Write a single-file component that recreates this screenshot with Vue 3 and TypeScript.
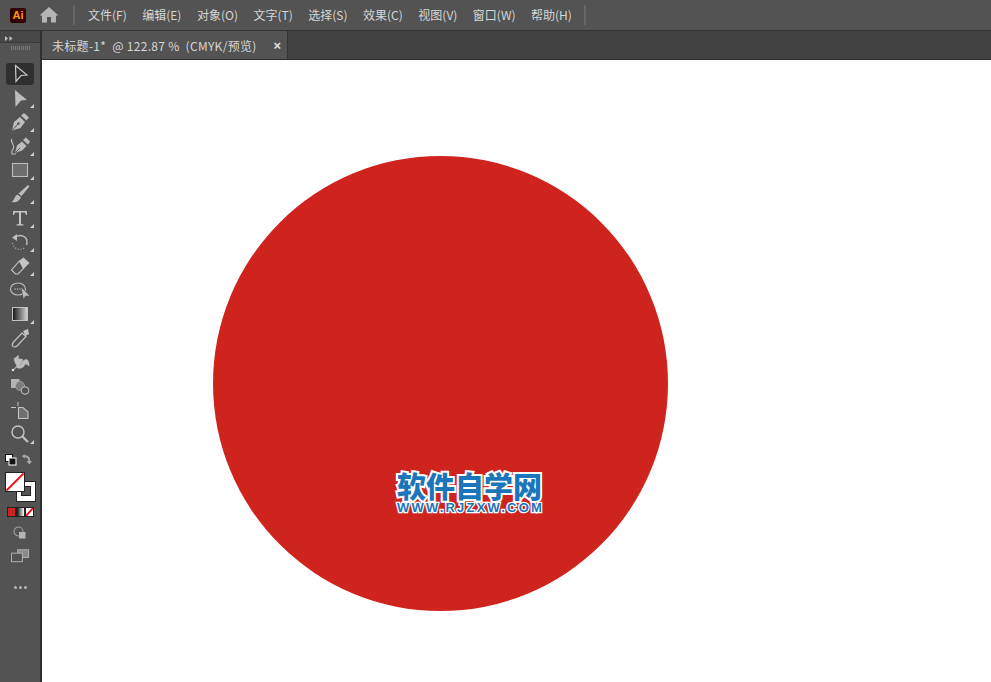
<script setup lang="ts">
const menus = ['文件(F)', '编辑(E)', '对象(O)', '文字(T)', '选择(S)', '效果(C)', '视图(V)', '窗口(W)', '帮助(H)']
const docTitle = '未标题-1*  @ 122.87 %  (CMYK/预览)'
</script>

<template>
  <div class="app">
    <header class="menubar">
      <div class="ai-logo">Ai</div>
      <svg class="home" width="20" height="18" viewBox="0 0 20 18">
        <path d="M10 1 L0.5 9.5 L3 9.5 L3 16.5 L8 16.5 L8 11 L12 11 L12 16.5 L17 16.5 L17 9.5 L19.5 9.5 Z" fill="#b4b4b4" />
      </svg>
      <span class="sep first"></span>
      <nav class="menus">
        <span v-for="m in menus" :key="m" class="menu">{{ m }}</span>
      </nav>
      <span class="sep"></span>
    </header>

    <div class="body">
      <aside class="toolbar">
        <div class="collapse">
          <svg width="8" height="5" viewBox="0 0 8 5"><path d="M0 0 L3 2.5 L0 5 Z M4.5 0 L7.5 2.5 L4.5 5 Z" fill="#c4c4c4" /></svg>
        </div>
        <div class="grip"></div>

        <div class="tool active">
          <svg width="24" height="24" viewBox="0 0 24 24"><path d="M7.5 3.5 L19 13 L13 13.5 L8 19.5 Z" fill="none" stroke="#c8c8c8" stroke-width="1.2" /></svg>
        </div>
        <div class="tool more">
          <svg width="24" height="24" viewBox="0 0 24 24"><path d="M7 4 L19 14 L13 14.5 L7.5 21 Z" fill="#bdbdbd" /></svg>
        </div>
        <div class="tool more">
          <svg width="24" height="24" viewBox="0 0 24 24">
            <path d="M12 7 L17 12 L12.5 18 L4 20.5 L6 12 Z" fill="#bdbdbd" />
            <path d="M13 5.5 L16 3 L21 7.5 L18.5 10.5 Z" fill="#bdbdbd" />
            <path d="M4.5 20 L10 14" stroke="#535353" stroke-width="1" />
            <circle cx="10.5" cy="13.5" r="1.2" fill="#535353" />
          </svg>
        </div>
        <div class="tool more">
          <svg width="24" height="24" viewBox="0 0 24 24">
            <path d="M14 7.5 L18.5 12 L14 16.5 L7 19 L9 11.5 Z" fill="#bdbdbd" />
            <path d="M15 6 L18 3.5 L22 7.5 L20 10.5 Z" fill="#bdbdbd" />
            <path d="M7.5 18.5 L12 14" stroke="#535353" stroke-width="1" />
            <path d="M4 5 C1.5 8 7 10 5.5 14 C4.5 16 3 18 4 20 L8 20" fill="none" stroke="#bdbdbd" stroke-width="1.1" />
          </svg>
        </div>
        <div class="tool more">
          <svg width="24" height="24" viewBox="0 0 24 24"><rect x="4.5" y="5.5" width="15" height="13" fill="#6e6e6e" stroke="#bdbdbd" stroke-width="1.1" /></svg>
        </div>
        <div class="tool more">
          <svg width="24" height="24" viewBox="0 0 24 24">
            <path d="M20 3 L21.5 4.5 L13.5 14 L10.5 11.5 Z" fill="#bdbdbd" />
            <path d="M9.5 12.5 L12.8 15 C12 19 8 21 3.5 20 C6.5 18.5 6 14.5 9.5 12.5 Z" fill="#bdbdbd" />
          </svg>
        </div>
        <div class="tool more">
          <svg width="24" height="24" viewBox="0 0 24 24"><path d="M5 5 L19 5 L19 9 L18 9 L17 6.5 L13 6.5 L13 18 L15.5 18.5 L15.5 19.5 L8.5 19.5 L8.5 18.5 L11 18 L11 6.5 L7 6.5 L6 9 L5 9 Z" fill="#c4c4c4" /></svg>
        </div>
        <div class="tool more">
          <svg width="24" height="24" viewBox="0 0 24 24">
            <path d="M8 7 C12 4 19 6 19 12 C19 13 18.8 14 18.5 15" fill="none" stroke="#bdbdbd" stroke-width="1.4" />
            <path d="M4 7.5 L9 4 L9 11 Z" fill="#bdbdbd" />
            <path d="M4.5 13 C5 18 11 21.5 16.5 18" fill="none" stroke="#a0a0a0" stroke-width="1.2" stroke-dasharray="1.2 1.6" />
          </svg>
        </div>
        <div class="tool more">
          <svg width="24" height="24" viewBox="0 0 24 24">
            <path d="M11.5 7 L15.5 14.5 L10 20 L7.5 20 L3.5 16 Z" fill="#535353" stroke="#c4c4c4" stroke-width="1.1" />
            <path d="M11.5 6.5 L15.5 3.5 L21.5 9 L15.5 15 Z" fill="#c4c4c4" />
          </svg>
        </div>
        <div class="tool">
          <svg width="24" height="24" viewBox="0 0 24 24">
            <ellipse cx="10" cy="11" rx="7.5" ry="6" fill="none" stroke="#bdbdbd" stroke-width="1.1" />
            <path d="M6.5 11 H13" stroke="#e0e0e0" stroke-width="1.1" stroke-dasharray="1.2 1.2" />
            <path d="M13 9 L22 18 L17.5 18 L15.5 21.5 Z" fill="#bdbdbd" stroke="#535353" stroke-width="0.6" />
          </svg>
        </div>
        <div class="tool more">
          <svg width="24" height="24" viewBox="0 0 24 24">
            <defs>
              <linearGradient id="grad-tool" x1="0" y1="0" x2="1" y2="0">
                <stop offset="0" stop-color="#151515" />
                <stop offset="1" stop-color="#d8d8d8" />
              </linearGradient>
            </defs>
            <rect x="4.5" y="5.5" width="15" height="13" fill="url(#grad-tool)" stroke="#c4c4c4" stroke-width="1" />
          </svg>
        </div>
        <div class="tool">
          <svg width="24" height="24" viewBox="0 0 24 24">
            <path d="M15 5 L20 3 L21 8 L17.5 10 Z" fill="#c4c4c4" />
            <path d="M14 7 L18 10.5 L9 20 C7.5 21.5 5 21 4.5 20 C4 19 4.5 17 6 15.5 Z" fill="none" stroke="#c4c4c4" stroke-width="1.1" />
          </svg>
        </div>
        <div class="tool">
          <svg width="24" height="24" viewBox="0 0 24 24">
            <path d="M5 20 L8 17 C10 15 7 14 7 12 L6 8.5 C9 8 9 5 11 6 C9 8 11 9.5 13 9 C15 8.5 15 11 13 13 L11 16 C14 15 14 10 18 9.5 C20.5 9.5 21 13 21 16 C19 14 17 13 16 16 C15 18 11 19 9 17.5" fill="#bdbdbd" stroke="#bdbdbd" stroke-width="0.7" />
            <circle cx="5" cy="20" r="1.3" fill="#e0e0e0" />
          </svg>
        </div>
        <div class="tool">
          <svg width="24" height="24" viewBox="0 0 24 24">
            <rect x="3" y="5" width="8.5" height="9" fill="#b4b4b4" />
            <circle cx="12" cy="12" r="4.5" fill="#7c7c7c" stroke="#a8a8a8" stroke-width="0.8" />
            <circle cx="17" cy="16.5" r="3.8" fill="#535353" stroke="#c4c4c4" stroke-width="1" />
          </svg>
        </div>
        <div class="tool">
          <svg width="24" height="24" viewBox="0 0 24 24">
            <path d="M3 9.5 H8 M10 4 V8" stroke="#c4c4c4" stroke-width="1" />
            <path d="M10.5 9.5 H15 L20 14 V20.5 H10.5 Z" fill="#707070" stroke="#c4c4c4" stroke-width="1.1" />
          </svg>
        </div>
        <div class="tool more">
          <svg width="24" height="24" viewBox="0 0 24 24">
            <circle cx="10" cy="10" r="6" fill="none" stroke="#c4c4c4" stroke-width="1.4" />
            <path d="M14.5 14.5 L20 20" stroke="#c4c4c4" stroke-width="2.2" />
          </svg>
        </div>

        <div class="swap-row">
          <svg width="12" height="12" viewBox="0 0 12 12">
            <rect x="0.5" y="0.5" width="7" height="7" fill="#fff" stroke="#111" />
            <rect x="4" y="4" width="7" height="7" fill="#111" stroke="#fff" />
          </svg>
          <svg width="12" height="13" viewBox="0 0 13 13">
            <path d="M1 3 L4 0.5 L4 2 C8 2 10 4 10 8 L12 8 L9 12 L6 8 L8 8 C8 5.5 6.5 4 4 4 L4 5.5 Z" fill="#a8a8a8" />
          </svg>
        </div>
        <div class="fill-stroke">
          <svg width="31" height="30" viewBox="0 0 31 30">
            <rect x="11.5" y="9.5" width="19" height="20" fill="#fff" stroke="#222" />
            <rect x="16.5" y="14.5" width="9" height="9" fill="#535353" stroke="#222" />
            <rect x="0.5" y="0.5" width="19" height="19" fill="#fff" stroke="#222" />
            <path d="M1.5 18.5 L18.5 1.5" stroke="#f0141e" stroke-width="2" />
          </svg>
        </div>
        <div class="mode-row">
          <span class="mode solid"></span>
          <span class="mode gradient"></span>
          <span class="mode none">
            <svg width="7" height="8" viewBox="0 0 7 8"><path d="M0 8 L7 0" stroke="#f0141e" stroke-width="2" /></svg>
          </span>
        </div>
        <div class="tool small">
          <svg width="16" height="16" viewBox="0 0 16 16">
            <circle cx="6.5" cy="6.5" r="4.5" fill="none" stroke="#a0a0a0" stroke-width="1.1" />
            <rect x="7" y="7" width="6.5" height="6.5" fill="#b4b4b4" />
          </svg>
        </div>
        <div class="tool screen">
          <svg width="19" height="14" viewBox="0 0 20 14">
            <rect x="7" y="0.5" width="11.5" height="8" fill="#8a8a8a" stroke="#b4b4b4" />
            <rect x="0.5" y="4" width="11.5" height="9" fill="#535353" stroke="#b4b4b4" />
          </svg>
        </div>
        <div class="dots"><i></i><i></i><i></i></div>
      </aside>

      <div class="divider"></div>

      <main class="workspace">
        <div class="tabbar">
          <div class="tab">
            <span class="tab-title">{{ docTitle }}</span>
            <span class="tab-close">×</span>
          </div>
        </div>
        <div class="canvas">
          <div class="circle"></div>
          <div class="watermark">
            <div class="wm-cn">软件自学网</div>
            <div class="wm-en">WWW.RJZXW.COM</div>
          </div>
        </div>
      </main>
    </div>
  </div>
</template>

<style>
html, body {
  margin: 0;
  overflow: hidden;
}
</style>

<style scoped>
.app {
  width: 991px;
  height: 682px;
  display: flex;
  flex-direction: column;
  overflow: hidden;
  background: #535353;
  font-family: "Noto Sans CJK SC", "Liberation Sans", sans-serif;
}

.menubar {
  height: 30px;
  flex: none;
  display: flex;
  align-items: center;
  background: #535353;
  border-bottom: 1px solid #333;
}

.ai-logo {
  width: 16px;
  height: 15px;
  margin-left: 10px;
  background: #330000;
  border-radius: 2px;
  color: #ff9a00;
  font: bold 11px/15px "Liberation Sans", sans-serif;
  text-align: center;
}

.home {
  margin-left: 13px;
}

.sep {
  width: 2px;
  height: 20px;
  background: #666;
}

.sep.first {
  margin-left: 14px;
}

.menus {
  display: flex;
  margin-left: 13px;
  margin-right: 12px;
  gap: 15.5px;
}

.menu {
  color: #d6d6d6;
  font-size: 12px;
  line-height: 16px;
}

.body {
  flex: 1;
  display: flex;
  min-height: 0;
}

.toolbar {
  width: 40px;
  flex: none;
  display: flex;
  flex-direction: column;
  align-items: center;
  background: #535353;
}

.collapse {
  align-self: stretch;
  box-sizing: border-box;
  height: 12px;
  background: #474747;
  border-bottom: 1px solid #3a3a3a;
  padding: 3px 0 0 5px;
  line-height: 0;
}

.grip {
  width: 19px;
  height: 4px;
  margin-top: 3px;
  margin-bottom: 13px;
  background: repeating-linear-gradient(90deg, #7a7a7a 0 1px, transparent 1px 2px);
}

.tool {
  position: relative;
  width: 28px;
  height: 24px;
  flex: none;
  display: flex;
  align-items: center;
  justify-content: center;
  border-radius: 3px;
}

.tool.active {
  background: #2f2f2f;
  height: 22px;
  margin-bottom: 1px;
}

.tool.more::after {
  content: "";
  position: absolute;
  right: 0;
  bottom: 2px;
  border-style: solid;
  border-width: 0 0 4px 4px;
  border-color: transparent transparent #d0d0d0 transparent;
}

.swap-row {
  width: 32px;
  box-sizing: border-box;
  padding: 0 3px 0 1px;
  margin-top: 7px;
  display: flex;
  justify-content: space-between;
  align-items: center;
}

.fill-stroke {
  width: 31px;
  height: 30px;
  margin-top: 6px;
  line-height: 0;
}

.mode-row {
  margin-top: 5px;
  display: flex;
}

.mode {
  box-sizing: border-box;
  width: 9px;
  height: 10px;
  border: 1px solid #222;
  overflow: hidden;
}

.mode.solid {
  background: #cf231d;
}

.mode.gradient {
  background: linear-gradient(90deg, #111, #fff);
}

.mode.none {
  background: #fff;
}

.mode.none svg {
  display: block;
}

.tool.small {
  margin-top: 6px;
  height: 20px;
}

.tool.screen {
  margin-top: 2px;
  height: 22px;
}

.dots {
  margin-top: 19px;
  display: flex;
  gap: 2px;
}

.dots i {
  width: 3px;
  height: 3px;
  border-radius: 50%;
  background: #b4b4b4;
}

.divider {
  width: 2px;
  flex: none;
  background: #2f2f2f;
}

.workspace {
  flex: 1;
  min-width: 0;
  display: flex;
  flex-direction: column;
}

.tabbar {
  height: 28px;
  flex: none;
  display: flex;
  background: #424242;
  border-bottom: 1px solid #2f2f2f;
}

.tab {
  box-sizing: border-box;
  width: 246px;
  padding: 0 6px 0 10px;
  display: flex;
  align-items: center;
  justify-content: space-between;
  background: #535353;
  border-right: 1px solid #333;
}

.tab-title {
  color: #d6d6d6;
  font-size: 12px;
  letter-spacing: 0.3px;
  white-space: pre;
}

.tab-close {
  color: #e0e0e0;
  font: bold 13px/1 "Liberation Sans", sans-serif;
}

.canvas {
  position: relative;
  flex: 1;
  background: #fff;
  overflow: hidden;
}

.circle {
  position: absolute;
  left: 171px;
  top: 96px;
  width: 455px;
  height: 455px;
  border-radius: 50%;
  background: #cf231d;
}

.watermark {
  position: absolute;
  left: 354px;
  top: 409px;
  width: 147px;
  text-align: center;
  color: #1a75bb;
  font-weight: 900;
}

.wm-cn {
  font-size: 29px;
  line-height: 32px;
  -webkit-text-stroke: 4px #fff;
  paint-order: stroke fill;
  white-space: nowrap;
}

.wm-en {
  font: bold 13px/13px "Liberation Sans", sans-serif;
  letter-spacing: 2.2px;
  margin-right: -2px;
  -webkit-text-stroke: 2.5px #fff;
  paint-order: stroke fill;
  white-space: nowrap;
}
</style>
